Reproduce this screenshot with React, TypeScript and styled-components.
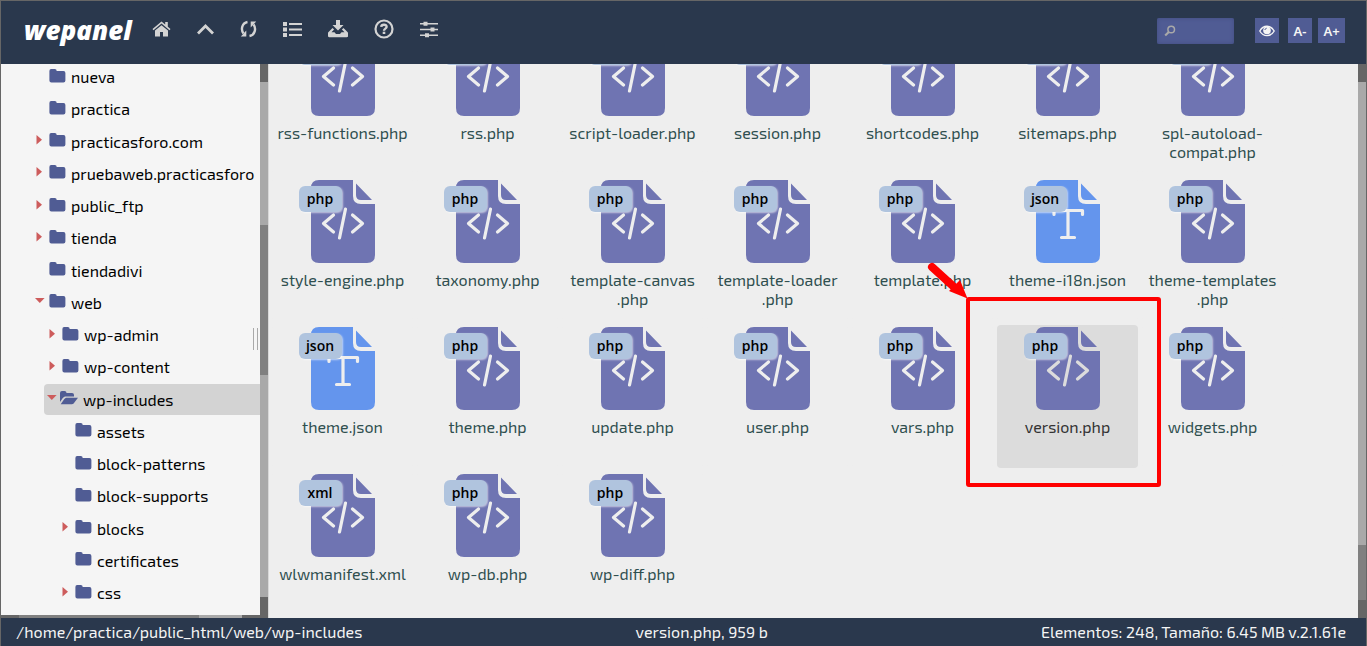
import React from 'react';
import styled, { createGlobalStyle, css } from 'styled-components';

const ui = `"Exo 2", "Noto Sans", sans-serif`;

const Global = createGlobalStyle`
  *, *::before, *::after { box-sizing: border-box; }
  body { margin: 0; background: #eee; font-family: ${ui}; font-size: 16px; overflow: hidden; }
  button, input { font: inherit; }
`;

const Window = styled.div`
  display: grid;
  grid-template-rows: 63px minmax(0, 1fr) 28px;
  height: 100vh;
  border: 1px solid #666;
  border-bottom: 0;
`;

const Header = styled.header`
  display: flex;
  align-items: flex-start;
  justify-content: space-between;
  padding: 0 21px 0 23px;
  background: #2a384d;
`;

const Brand = styled.a`
  display: block;
  width: 115px;
  margin-top: 2px;
  color: #fff;
  font: italic 800 26px/40px "Open Sans", sans-serif;
  text-decoration: none;
`;

const Toolbar = styled.nav`
  display: flex;
  align-items: center;
  height: 56px;
`;

const ToolButtons = styled.div`
  display: flex;
`;

const ToolButton = styled.button`
  display: flex;
  align-items: center;
  justify-content: center;
  height: 56px;
  padding: 0 13px;
  border: 0;
  background: none;
  color: #d3d3d3;
`;

const Controls = styled.div`
  display: flex;
  align-items: flex-start;
  padding-top: 17px;
`;

const SearchBox = styled.label`
  display: flex;
  align-items: center;
  width: 77px;
  height: 26px;
  margin-right: 21px;
  padding-left: 7px;
  border-radius: 2px;
  background: #505c94;
  box-shadow: inset 0 0 4px #424d80;
  color: #a9a9a9;
`;

const SearchInput = styled.input`
  width: 56px;
  border: 0;
  outline: 0;
  background: none;
  color: #fff;
`;

const ZoomButtons = styled.div`
  display: flex;
  gap: 6px;
  margin-left: 9px;
`;

const SquareButton = styled.button<{ $wide?: boolean }>`
  display: flex;
  align-items: center;
  justify-content: center;
  width: ${p => (p.$wide ? 27 : 24)}px;
  height: 25px;
  padding: 0;
  border: 0;
  background: #505c94;
  color: #f5f5f5;
  font: 600 13px/24px "Noto Sans", sans-serif;
`;

const Main = styled.div`
  display: grid;
  grid-template-columns: 268px minmax(0, 1fr);
`;

const Sidebar = styled.aside`
  display: grid;
  grid-template-columns: minmax(0, 1fr) 8px;
  min-height: 0;
  border-right: 1px solid #d8d8d8;
`;

const TreePane = styled.div`
  position: relative;
  display: flex;
  flex-direction: column;
  min-height: 0;
  overflow: hidden;
  background: #f5f5f5;
`;

const Tree = styled.ul`
  flex: 1;
  display: flex;
  flex-direction: column;
  justify-content: space-between;
  margin: -3px 0 0;
  padding: 0 0 7px;
  list-style: none;
`;

const TreeRow = styled.li<{ $depth: number; $current?: boolean }>`
  display: flex;
  align-items: center;
  height: 31px;
  margin-left: ${p => 30 + p.$depth * 13}px;
  border-radius: 4px 0 0 4px;
  white-space: nowrap;
  ${p => p.$current && css`background: #d3d3d3;`}
`;

const Arrow = styled.span<{ $narrow?: boolean }>`
  display: flex;
  flex: none;
  justify-content: center;
  width: ${p => (p.$narrow ? 16 : 18)}px;
  height: 12px;
  color: #cd5c5c;
`;

const FolderLink = styled.a`
  display: flex;
  align-items: center;
  gap: 5px;
  color: #000;
  line-height: 31px;
  text-decoration: none;
  svg { flex: none; margin-top: -2px; color: #505c94; }
`;

const Grip = styled.span`
  position: absolute;
  right: 2px;
  top: 264px;
  width: 5px;
  height: 22px;
  border: 1px solid #a9a9a9;
  border-width: 0 1px;
`;

const HScroll = styled.div`
  display: grid;
  grid-template-columns: 18px 180px 43px 1fr;
  height: 3px;
  span:nth-child(odd) { background: #a9a9a9; }
  span:nth-child(1), span:nth-child(4) { background: #666; }
  span:nth-child(2) { background: #808080; }
`;

const VScroll = styled.div<{ $rows: string }>`
  display: grid;
  grid-template-rows: ${p => p.$rows};
  background: #a9a9a9;
`;

const Cap = styled.span<{ $thumb?: boolean }>`
  background: ${p => (p.$thumb ? '#808080' : '#666')};
`;

const Content = styled.main`
  display: grid;
  grid-template-columns: minmax(0, 1fr) 8px;
  min-height: 0;
  overflow: hidden;
`;

const Files = styled.div`
  display: flex;
  flex-direction: column;
  justify-content: flex-end;
  min-height: 0;
  overflow: hidden;
  padding: 0 0 3px 3px;
`;

const Grid = styled.ul`
  display: flex;
  flex-wrap: wrap;
  gap: 4px;
  margin: 0;
  padding: 0;
  list-style: none;
`;

const FileCard = styled.li<{ $selected?: boolean }>`
  display: flex;
  flex-direction: column;
  align-items: center;
  width: 141px;
  height: 143px;
  padding-top: 2px;
  border-radius: 4px;
  --paper: ${p => (p.$selected ? '#dcdcdc' : '#eee')};
  background: var(--paper);
  color: ${p => (p.$selected ? '#333' : '#2f4f4f')};
  text-align: center;
`;

const IconWrap = styled.span`
  position: relative;
  display: block;
  width: 64px;
  height: 83px;
  svg { display: block; }
`;

const Badge = styled.span`
  position: absolute;
  left: -12px;
  top: 6px;
  width: 43px;
  height: 26px;
  border-radius: 6px;
  background: #b0c4de;
  box-shadow: 1px 1px 2px rgba(255, 255, 255, 0.6);
  color: #000;
  font: 600 14px/25px "Open Sans", sans-serif;
`;

const FileName = styled.a`
  margin-top: 7px;
  color: inherit;
  line-height: 19px;
  white-space: nowrap;
  text-decoration: none;
`;

const Status = styled.footer`
  display: flex;
  justify-content: space-between;
  padding: 0 20px 0 15px;
  background: #2a384d;
  color: #f5f5f5;
  line-height: 28px;
`;

const Highlight = styled.span`
  position: absolute;
  left: -110px;
  top: -69px;
  pointer-events: none;
`;

const FolderIcon = () => (
  <svg width="17" height="14" viewBox="0 0 17 14" fill="currentColor" aria-hidden="true">
    <path d="M2.5 0h3.3a2 2 0 0 1 1.9 2h6.800A2 2 0 0 1 16.400 4v7.500a2 2 0 0 1-2 2h-12a2 2 0 0 1-2-2V2a2 2 0 0 1 2.100-2z" />
  </svg>
);

const FolderOpenIcon = () => (
  <svg width="18" height="14" viewBox="0 0 18 14" fill="currentColor" aria-hidden="true">
    <path d="M0 11V2a2 2 0 0 1 2-2h2.500a2 2 0 0 1 2 2h5.500a2 2 0 0 1 2 2v1.500H6c-1.500 0-2.500.6-3.400 1.700z" />
    <path d="M.7 13.200 4 8.500c.8-1.300 1.600-1.800 3-1.800h11l-4 5.200c-.8 1-1.600 1.400-3 1.400z" />
  </svg>
);

const glyphs: Record<string, React.ReactNode> = {
  Inicio: (
    <svg width="19" height="16" viewBox="0 0 19 16" fill="currentColor">
      <path d="M9.500 4.200 3 9.600V15.500h5V11h3v4.500h5V9.600z" />
      <path d="M9.500.5.500 8l1 1.200 8-6.600 8 6.600 1-1.200-2.700-2.300V1h-2.600v2.500z" />
    </svg>
  ),
  Subir: (
    <svg width="17" height="12" viewBox="0 0 17 12" fill="none" stroke="currentColor" strokeWidth="2.800">
      <path d="m1 10.500 7.500-7.500 7.500 7.500" />
    </svg>
  ),
  Recargar: (
    <svg width="17" height="18" viewBox="0 0 17 18" fill="none" stroke="currentColor" strokeWidth="2.400">
      <path d="M7.500 2C2 3 .5 9.500 3.500 13.500M9.500 16C15 15 16.500 8.500 13.500 4.500" />
      <path d="M6.300 10.500V16.500H.8zM10.700 7.500V1.500H16.200z" fill="currentColor" stroke="none" />
    </svg>
  ),
  Lista: (
    <svg width="19" height="15" viewBox="0 0 19 15" fill="currentColor">
      <path d="M0 0h4v4H0zM0 5.500h4v4H0zM0 11h4v4H0zM6 1h13v2H6zM6 6.500h13v2H6zM6 12h13v2H6z" />
    </svg>
  ),
  Descargar: (
    <svg width="20" height="18" viewBox="0 0 20 18" fill="currentColor">
      <path d="M8 0h4v5h3.500L10 10.500 4.500 5H8z" />
      <path d="M4.500 8 .3 12.300C0 12.700 0 13 0 13.300V16c0 .8.400 1.200 1.200 1.200h17.600c.8 0 1.200-.4 1.200-1.200v-2.700c0-.3 0-.6-.3-1L15.500 8l-1.600 1.500 2.600 2.700h-3L12 14H8l-1.500-1.800h-3l2.600-2.700z" />
    </svg>
  ),
  Ayuda: (
    <svg width="20" height="20" viewBox="0 0 20 20" fill="none" stroke="currentColor">
      <circle cx="10" cy="10" r="8.500" strokeWidth="2.200" />
      <path d="M7.200 7.800C7.500 4.900 12.800 5 12.600 8c-.1 1.700-2.600 1.600-2.600 3.700" strokeWidth="2.400" />
      <path d="M10 12.700V15" strokeWidth="2.600" />
    </svg>
  ),
  Ajustes: (
    <svg width="18" height="17" viewBox="0 0 18 17" fill="currentColor">
      <path d="M0 2h18v1.500H0zM0 7.800h18v1.500H0zM0 13.500h18V15H0zM3.500.8h4v4h-4zM10.500 6.500h4v4h-4zM5 12.300h4v4H5z" />
    </svg>
  ),
};

const SearchIcon = () => (
  <svg width="12" height="12" viewBox="0 0 12 12" fill="none" stroke="currentColor" aria-hidden="true">
    <circle cx="7.200" cy="4.500" r="3.300" strokeWidth="1.500" />
    <path d="M4.800 7 1.200 10.500" strokeWidth="2.200" />
  </svg>
);

const EyeIcon = () => (
  <svg width="16" height="12" viewBox="0 0 16 12" aria-hidden="true">
    <path d="M.8 6C4.300-.3 11.700-.3 15.200 6 11.700 12.200 4.300 12.200.8 6z" fill="none" stroke="currentColor" strokeWidth="1.400" />
    <circle cx="8" cy="5.400" r="3.800" fill="currentColor" />
    <path d="M5.800 5A2.300 2.300 0 0 1 7.700 3.200" fill="none" stroke="#505c94" />
  </svg>
);

const ArrowIcon = ({ down }: { down?: boolean }) => (
  <svg width="10" height="10" viewBox="0 0 10 10" fill="currentColor" aria-hidden="true">
    <path d={down ? 'M0 2h9.600L4.800 7z' : 'M1.500 0v9.600L7 4.800z'} />
  </svg>
);

const FileIcon = ({ text }: { text?: boolean }) => (
  <svg width="64" height="83" viewBox="0 0 64 83" fill="none" aria-hidden="true">
    <path
      d="M8 0H42V16Q42 24 50 24H64V75Q64 83 56 83H8Q0 83 0 75V8Q0 0 8 0zM45 3.500 61 20H50Q45 20 45 15z"
      fill={text ? '#6495ed' : '#6f74b2'}
    />
    <g stroke="var(--paper)" strokeWidth="3.200" strokeLinecap="round" strokeLinejoin="round">
      {text ? (
        <path d="M18 34.500V30.500H46.500V34.500M32 30.500V57.500M25.500 57.500H38.500" />
      ) : (
        <path d="M22.500 35 12.500 43.500 22.500 52M41.500 35 51.500 43.500 41.500 52M34.500 29 28.500 58" />
      )}
    </g>
  </svg>
);

type Row = [name: string, depth: number, state?: 'closed' | 'open'];

const tree: Row[] = [
  ['nueva', 0],
  ['practica', 0],
  ['practicasforo.com', 0, 'closed'],
  ['pruebaweb.practicasforo', 0, 'closed'],
  ['public_ftp', 0, 'closed'],
  ['tienda', 0, 'closed'],
  ['tiendadivi', 0],
  ['web', 0, 'open'],
  ['wp-admin', 1, 'closed'],
  ['wp-content', 1, 'closed'],
  ['wp-includes', 1, 'open'],
  ['assets', 2],
  ['block-patterns', 2],
  ['block-supports', 2],
  ['blocks', 2, 'closed'],
  ['certificates', 2],
  ['css', 2, 'closed'],
];

type FileEntry = { ext: string; lines: string[]; badge: string };

const scrolledOff = 7;

const files: FileEntry[] = [
  'rss-functions.php', 'rss.php', 'script-loader.php', 'session.php', 'shortcodes.php', 'sitemaps.php',
  'spl-autoload-|compat.php', 'style-engine.php', 'taxonomy.php', 'template-canvas|.php',
  'template-loader|.php', 'template.php', 'theme-i18n.json', 'theme-templates|.php', 'theme.json',
  'theme.php', 'update.php', 'user.php', 'vars.php', 'version.php', 'widgets.php', 'wlwmanifest.xml',
  'wp-db.php', 'wp-diff.php',
].map((name, i) => {
  const ext = name.slice(name.lastIndexOf('.') + 1);
  return { ext, lines: name.split('|'), badge: i < scrolledOff ? '' : ext };
});

export default function App() {
  return (
    <>
      <Global />
      <Window>
        <Header>
          <Toolbar>
            <Brand href="#">wepanel</Brand>
            <ToolButtons>
              {Object.entries(glyphs).map(([label, icon]) => (
                <ToolButton key={label} type="button" aria-label={label}>{icon}</ToolButton>
              ))}
            </ToolButtons>
          </Toolbar>
          <Controls>
            <SearchBox>
              <SearchIcon />
              <SearchInput type="text" aria-label="Buscar" />
            </SearchBox>
            <SquareButton type="button" aria-label="Ver"><EyeIcon /></SquareButton>
            <ZoomButtons>
              <SquareButton type="button">A-</SquareButton>
              <SquareButton type="button" $wide>A+</SquareButton>
            </ZoomButtons>
          </Controls>
        </Header>
        <Main>
          <Sidebar>
            <TreePane>
              <Tree>
                {tree.map(([name, depth, state]) => {
                  const current = name === 'wp-includes';
                  return (
                    <TreeRow key={name} $depth={depth} $current={current}>
                      <Arrow $narrow={current}>{state && <ArrowIcon down={state === 'open'} />}</Arrow>
                      <FolderLink href="#">
                        {current ? <FolderOpenIcon /> : <FolderIcon />}
                        {name}
                      </FolderLink>
                    </TreeRow>
                  );
                })}
              </Tree>
              <HScroll><span /><span /><span /><span /></HScroll>
              <Grip />
            </TreePane>
            <VScroll $rows="18px 143fr 150fr 222fr 21px">
              <Cap /><i /><Cap $thumb /><i /><Cap />
            </VScroll>
          </Sidebar>
          <Content>
            <Files>
              <Grid>
                {files.map(({ ext, lines, badge }) => {
                  const selected = lines[0] === 'version.php';
                  return (
                    <FileCard key={lines[0]} $selected={selected}>
                      <IconWrap>
                        <FileIcon text={ext === 'json'} />
                        <Badge>{badge}</Badge>
                        {selected && (
                          <Highlight>
                            <svg width="240" height="232" viewBox="0 0 240 232" fill="none" aria-hidden="true">
                              <rect x="42" y="41" width="191" height="186" rx="1" stroke="#f00" strokeWidth="4" />
                              <path d="M6 9 28 29" stroke="#f00" strokeWidth="8" strokeLinecap="round" />
                              <path d="M23 33 34 22 41.500 40.500z" fill="#f00" />
                            </svg>
                          </Highlight>
                        )}
                      </IconWrap>
                      <FileName href="#">{lines[0]}{lines[1] && <><br />{lines[1]}</>}</FileName>
                    </FileCard>
                  );
                })}
              </Grid>
            </Files>
            <VScroll $rows="18px 463fr 55fr 18px">
              <Cap /><i /><Cap $thumb /><Cap />
            </VScroll>
          </Content>
        </Main>
        <Status>
          <span>/home/practica/public_html/web/wp-includes</span>
          <span>version.php, 959 b</span>
          <span>Elementos: 248, Tamaño: 6.45 MB v.2.1.61e</span>
        </Status>
      </Window>
    </>
  );
}
